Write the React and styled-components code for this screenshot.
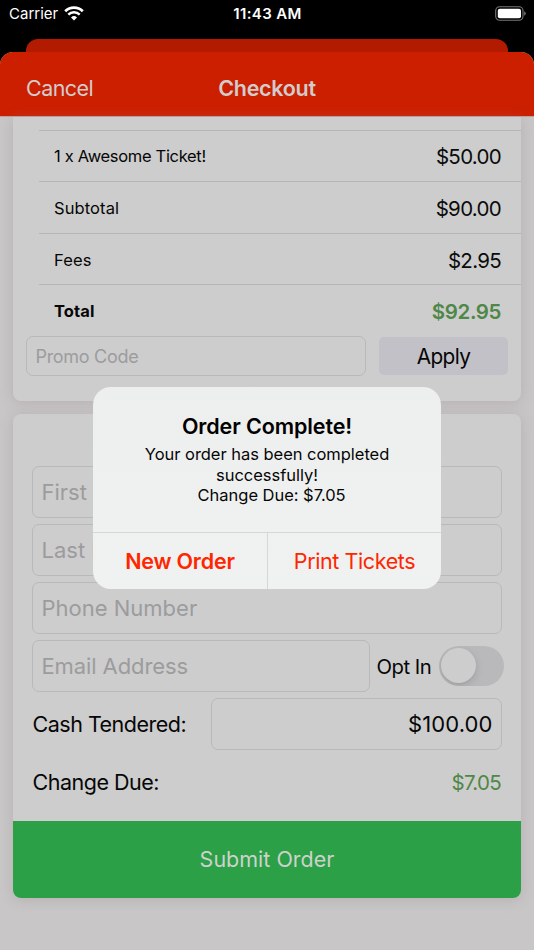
import React from "react";
import styled, { createGlobalStyle } from "styled-components";

const GlobalStyle = createGlobalStyle`
  * {
    box-sizing: border-box;
  }
  body {
    margin: 0;
    background: #000;
    font-family: Inter, "Liberation Sans", sans-serif;
    color: #060606;
  }
  input,
  button {
    font-family: inherit;
  }
`;

const Screen = styled.div`
  position: relative;
  display: flex;
  flex-direction: column;
  width: 534px;
  height: 950px;
  overflow: hidden;
  background: #000;
`;

const StatusBar = styled.div`
  display: grid;
  grid-template-columns: 1fr auto 1fr;
  align-items: center;
  height: 27px;
  margin-bottom: 12px;
  padding: 0 8px 0 9px;
  color: #fff;
  font-size: 15px;
  line-height: 19px;
  flex-shrink: 0;
`;

const Carrier = styled.div`
  display: flex;
  align-items: center;
  gap: 6px;
`;

const Clock = styled.div`
  font-weight: 600;
  letter-spacing: 0.35px;
`;

const Battery = styled.svg`
  justify-self: end;
`;

const BackSheet = styled.div`
  height: 13px;
  margin: 0 26px;
  border-radius: 12px 12px 0 0;
  background: #b31b00;
  flex-shrink: 0;
`;

const Sheet = styled.div`
  flex: 1;
  display: flex;
  flex-direction: column;
  border-radius: 13px 13px 0 0;
  overflow: hidden;
  background: #c8c6c7;
`;

const NavBar = styled.div`
  display: grid;
  grid-template-columns: 1fr auto 1fr;
  align-items: center;
  height: 64px;
  padding: 8px 26px 0;
  background: #cc1f00;
  color: #d0cdcc;
  font-size: 21.5px;
  flex-shrink: 0;
`;

const NavAction = styled.span`
  letter-spacing: -0.55px;
`;

const NavTitle = styled.div`
  font-weight: 600;
  letter-spacing: -0.3px;
`;

const Content = styled.div`
  flex: 1;
  display: flex;
  flex-direction: column;
  gap: 13px;
  padding: 0 13px;
  border-top: 1px solid #c0a19c;
`;

const Card = styled.div`
  border-radius: ${(props) => (props.$flush ? "0 0 8px 8px" : "8px")};
  background: #cdcdcd;
  box-shadow: 0 2px 13px rgba(150, 135, 138, 0.32);
`;

const Rows = styled.div`
  padding-top: 12.5px;
`;

const Row = styled.div`
  display: flex;
  align-items: center;
  justify-content: space-between;
  height: 51.67px;
  margin-left: 26px;
  padding: 1px 20px 0 15px;
  border-top: 1px solid #b6b6b7;
  font-size: 16.5px;
  letter-spacing: ${(props) => (props.$tight ? "-0.32px" : "0.1px")};
  font-weight: ${(props) => (props.$bold ? 700 : 400)};
`;

const Amount = styled.span`
  padding-top: 1px;
  font-size: 20.5px;
  letter-spacing: ${(props) => (props.$bold ? "-0.4px" : "-0.7px")};
  color: ${(props) => (props.$green ? "#4f8748" : "#0b0b0b")};
  font-weight: ${(props) => (props.$bold ? 600 : 400)};
`;

const PromoRow = styled.div`
  display: flex;
  align-items: center;
  gap: 13px;
  padding: 0 13px 24.5px;
`;

const Input = styled.input`
  flex: 1;
  min-width: 0;
  height: ${(props) => (props.$small ? 40 : 52)}px;
  padding: 0 8.5px;
  border: 1px solid #b9b9ba;
  border-radius: 7px;
  outline: none;
  background: transparent;
  color: #060606;
  font-size: ${(props) => (props.$small ? 18 : 22)}px;
  letter-spacing: ${(props) => props.$spacing || 0}px;
  text-align: ${(props) => (props.$right ? "right" : "left")};
  &::placeholder {
    color: #9c9c9d;
    opacity: 1;
  }
`;

const ApplyButton = styled.button`
  width: 129px;
  height: 38px;
  padding: 1px 0 0;
  border: 0;
  border-radius: 5px;
  background: #c2c1c8;
  color: #060606;
  font-size: 20.8px;
  letter-spacing: -0.6px;
`;

const Form = styled.div`
  display: flex;
  flex-direction: column;
  gap: 6px;
  padding: 52px 19px 13px;
`;

const Field = styled.div`
  display: flex;
  align-items: center;
  height: 52px;
`;

const Label = styled.label`
  width: ${(props) => props.$width || "auto"};
  padding-left: 0.5px;
  font-size: 21.5px;
  letter-spacing: -0.5px;
  white-space: nowrap;
`;

const OptIn = styled.label`
  width: 68.5px;
  padding: 2px 0 0 6.5px;
  font-size: 20.3px;
  letter-spacing: -0.5px;
  white-space: nowrap;
`;

const Toggle = styled.div`
  width: 65.5px;
  height: 40px;
  margin-right: -2px;
  padding: 2.5px;
  border-radius: 20px;
  background: #b9b9bc;
  overflow: hidden;
`;

const Knob = styled.div`
  width: 35px;
  height: 35px;
  border-radius: 50%;
  background: #cdcdcd;
  box-shadow: 0 3px 8px rgba(0, 0, 0, 0.12), 0 1px 2px rgba(0, 0, 0, 0.05);
`;

const ChangeDue = styled(Amount)`
  margin-left: auto;
  padding-right: 1px;
`;

const SubmitButton = styled.button`
  display: block;
  width: 100%;
  height: 77px;
  padding: 0;
  border: 0;
  border-radius: 0 0 8px 8px;
  background: #2ba047;
  color: #cdd2cd;
  font-size: 21.5px;
`;

const Alert = styled.div`
  position: absolute;
  top: 387px;
  left: 93px;
  display: flex;
  flex-direction: column;
  width: 348px;
  height: 202px;
  border-radius: 18px;
  overflow: hidden;
  background: linear-gradient(#edeeee, #f0f2f1);
  text-align: center;
`;

const AlertBody = styled.div`
  flex: 1;
  padding-top: 25px;
`;

const AlertTitle = styled.div`
  font-size: 21.5px;
  font-weight: 600;
  line-height: 28px;
  letter-spacing: -0.1px;
  color: #000;
`;

const AlertText = styled.div`
  margin-top: 4px;
  font-size: 16.5px;
  line-height: 20.6px;
  letter-spacing: -0.03px;
  white-space: pre;
`;

const AlertActions = styled.div`
  display: grid;
  grid-template-columns: 1fr 1fr;
  height: 57.5px;
  border-top: 1px solid #d5d6d6;
`;

const AlertButton = styled.button`
  padding: 0;
  border: 0;
  background: transparent;
  color: #ff2600;
  font-size: 21.5px;
  letter-spacing: ${(props) => (props.$bold ? "-0.2px" : "-0.4px")};
  font-weight: ${(props) => (props.$bold ? 600 : 400)};
  & + & {
    border-left: 1px solid #d5d6d6;
  }
`;

const rows = [
  { label: "1 x Awesome Ticket!", amount: "$50.00", tight: true },
  { label: "Subtotal", amount: "$90.00" },
  { label: "Fees", amount: "$2.95" },
  { label: "Total", amount: "$92.95", total: true },
];

const WifiIcon = () => (
  <svg width="20" height="15" viewBox="0 0 20 15" fill="none" stroke="#fff">
    <path d="M1.2 5.2 A12.6 12.6 0 0 1 18.8 5.2" strokeWidth="2.7" />
    <path d="M4.3 8.6 A8.2 8.2 0 0 1 15.7 8.6" strokeWidth="2.5" />
    <path d="M10 14.6 L7 11.5 A4.3 4.3 0 0 1 13 11.5 Z" fill="#fff" stroke="none" />
  </svg>
);

const App = () => {
  return (
    <>
      <GlobalStyle />
      <Screen>
        <StatusBar>
          <Carrier>
            Carrier
            <WifiIcon />
          </Carrier>
          <Clock>11:43 AM</Clock>
          <Battery width="31" height="15" viewBox="0 0 31 15">
            <rect x="0.7" y="0.7" width="27.3" height="13.6" rx="4" fill="none" stroke="#777" strokeWidth="1.1" />
            <rect x="2.8" y="2.7" width="23.2" height="9.6" rx="2" fill="#fff" />
            <path d="M29.2 5.2 q1.6 0.8 1.6 2.3 t-1.6 2.3z" fill="#777" />
          </Battery>
        </StatusBar>
        <BackSheet />
        <Sheet>
          <NavBar>
            <NavAction>Cancel</NavAction>
            <NavTitle>Checkout</NavTitle>
          </NavBar>
          <Content>
            <Card $flush>
              <Rows>
                {rows.map((row) => (
                  <Row key={row.label} $bold={row.total} $tight={row.tight}>
                    {row.label}
                    <Amount $bold={row.total} $green={row.total}>
                      {row.amount}
                    </Amount>
                  </Row>
                ))}
              </Rows>
              <PromoRow>
                <Input $small $spacing={-0.3} placeholder="Promo Code" />
                <ApplyButton>Apply</ApplyButton>
              </PromoRow>
            </Card>
            <Card>
              <Form>
                <Field>
                  <Input placeholder="First Name" />
                </Field>
                <Field>
                  <Input placeholder="Last Name" />
                </Field>
                <Field>
                  <Input placeholder="Phone Number" />
                </Field>
                <Field>
                  <Input $spacing={-0.1} placeholder="Email Address" />
                  <OptIn>Opt In</OptIn>
                  <Toggle>
                    <Knob />
                  </Toggle>
                </Field>
                <Field>
                  <Label $width="179px">Cash Tendered:</Label>
                  <Input $right $spacing={0.1} defaultValue="$100.00" />
                </Field>
                <Field>
                  <Label>Change Due:</Label>
                  <ChangeDue $green>$7.05</ChangeDue>
                </Field>
              </Form>
              <SubmitButton>Submit Order</SubmitButton>
            </Card>
          </Content>
        </Sheet>
        <Alert>
          <AlertBody>
            <AlertTitle>Order Complete!</AlertTitle>
            <AlertText>
              {"Your order has been completed\nsuccessfully!\n  Change Due: $7.05"}
            </AlertText>
          </AlertBody>
          <AlertActions>
            <AlertButton $bold>New Order</AlertButton>
            <AlertButton>Print Tickets</AlertButton>
          </AlertActions>
        </Alert>
      </Screen>
    </>
  );
};

export default App;
